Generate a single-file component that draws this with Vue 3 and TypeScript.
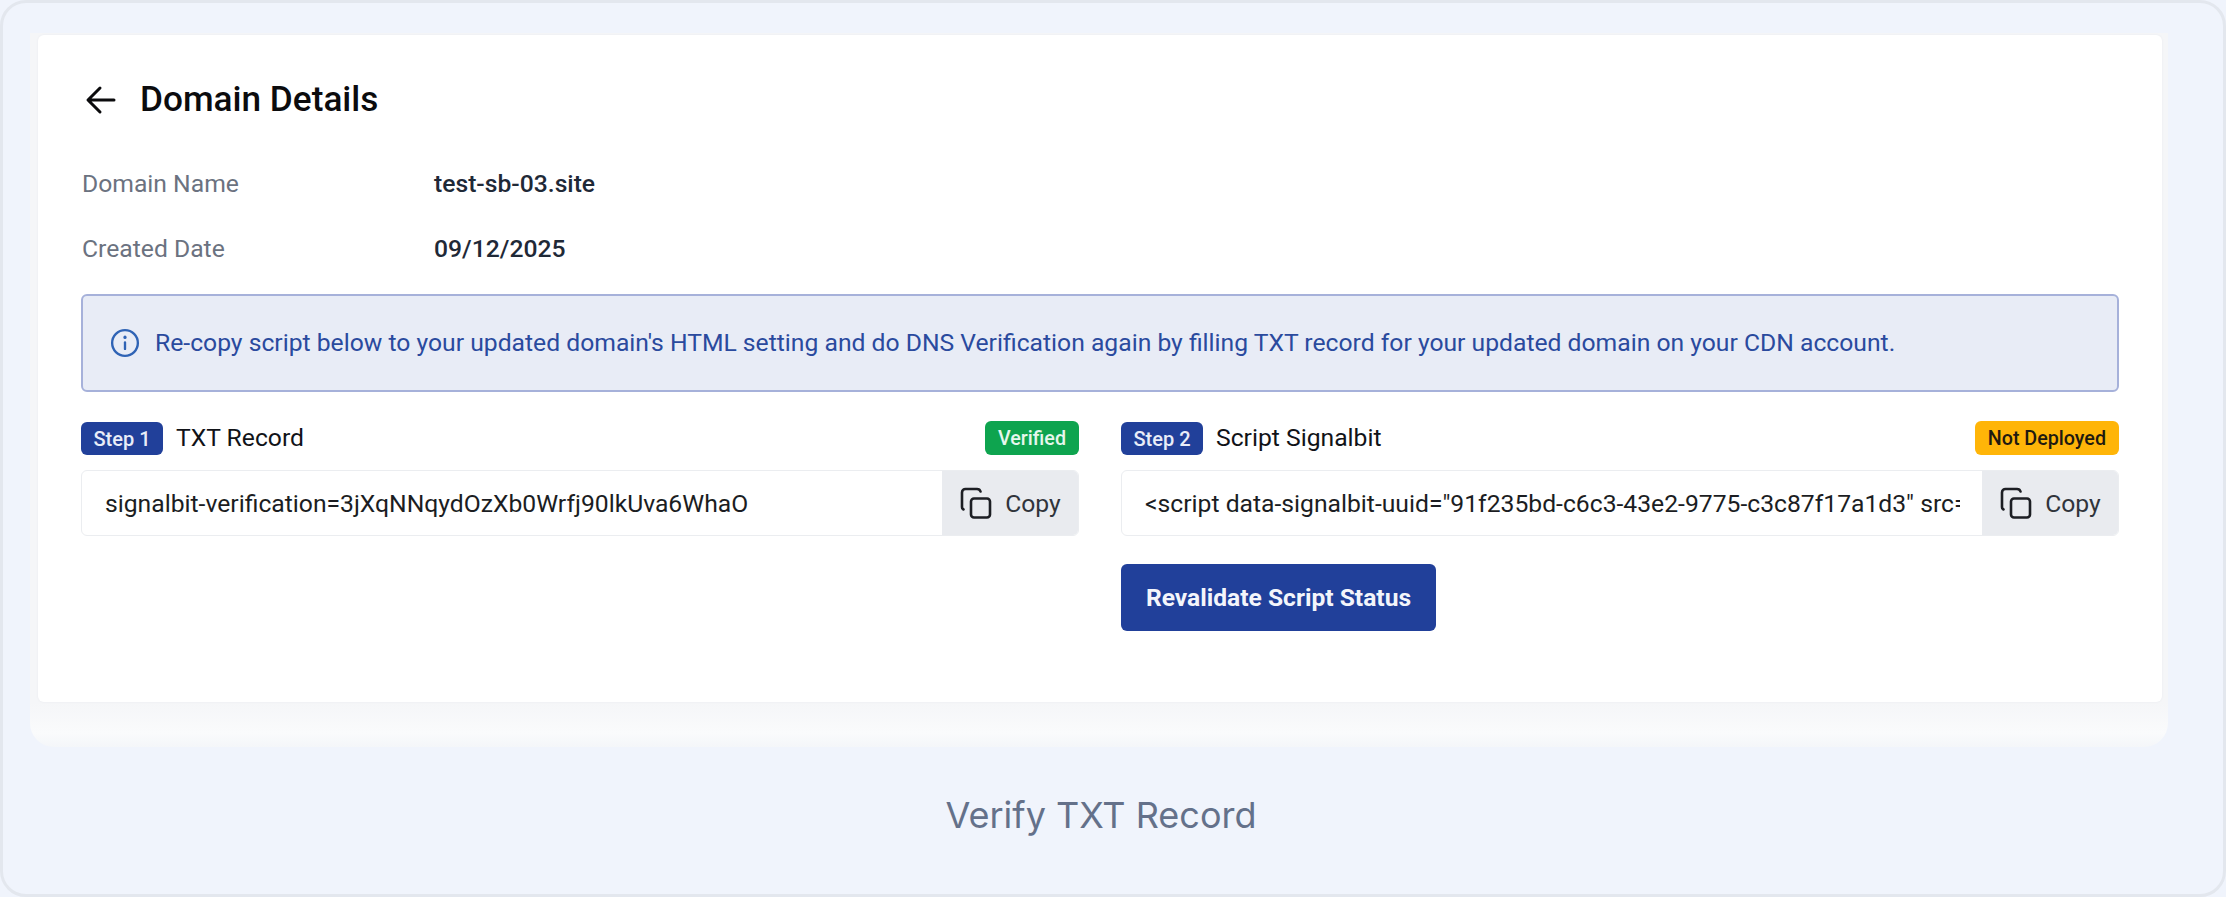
<script setup lang="ts">
interface Field { label: string; value: string }
interface Step {
  step: string
  title: string
  status: string
  statusClass: string
  code: string
}
const fields: Field[] = [
  { label: 'Domain Name', value: 'test-sb-03.site' },
  { label: 'Created Date', value: '09/12/2025' },
]
const steps: Step[] = [
  {
    step: 'Step 1',
    title: 'TXT Record',
    status: 'Verified',
    statusClass: 'ok',
    code: 'signalbit-verification=3jXqNNqydOzXb0Wrfj90lkUva6WhaO',
  },
  {
    step: 'Step 2',
    title: 'Script Signalbit',
    status: 'Not Deployed',
    statusClass: 'warn',
    code: '<script data-signalbit-uuid="91f235bd-c6c3-43e2-9775-c3c87f17a1d3" src=',
  },
]
</script>

<template>
  <div class="frame">
    <div class="tray">
      <main class="card">
        <header class="head">
          <svg class="back" viewBox="0 0 32 32" fill="none" stroke="#0b0b0d" stroke-width="3" stroke-linecap="round" stroke-linejoin="round">
            <path d="M29 16H3.500M15 4 3 16l12 12" />
          </svg>
          <h1>Domain Details</h1>
        </header>

        <div class="fields">
          <div v-for="f in fields" :key="f.label" class="field">
            <span class="label">{{ f.label }}</span>
            <span class="value">{{ f.value }}</span>
          </div>
        </div>

        <div class="alert">
          <svg class="info" viewBox="0 0 28 28" fill="none" stroke="#2f63b5" stroke-width="2.2" stroke-linecap="round">
            <circle cx="14" cy="14" r="12" />
            <path d="M14 13.500v6" />
            <path d="M14 8.600v.2" stroke-width="3" />
          </svg>
          <span class="alert-text">Re-copy script below to your updated domain's HTML setting and do DNS Verification again by filling TXT record for your updated domain on your CDN account.</span>
        </div>

        <div class="steps">
          <section v-for="s in steps" :key="s.step" class="step">
            <div class="step-head">
              <span class="pill">{{ s.step }}</span>
              <span class="step-title">{{ s.title }}</span>
              <span class="status" :class="s.statusClass">{{ s.status }}</span>
            </div>
            <div class="code-row">
              <div class="code">{{ s.code }}</div>
              <button class="copy" type="button">
                <svg viewBox="0 0 32 32" fill="none" stroke="#1d1f24" stroke-width="2.6" stroke-linecap="round" stroke-linejoin="round">
                  <rect x="11" y="11.500" width="19" height="19" rx="3" />
                  <path d="M3.500 22.500c-1-.5-1.500-1.400-1.500-2.500V5.500A3.500 3.500 0 0 1 5.500 2H17c1.700 0 3 .8 3.500 2.500" />
                </svg>
                <span>Copy</span>
              </button>
            </div>
            <button v-if="s.statusClass === 'warn'" class="revalidate" type="button">Revalidate Script Status</button>
          </section>
        </div>
      </main>
    </div>
    <p class="caption">Verify TXT Record</p>
  </div>
</template>

<style>
html, body { margin: 0; background: #f0f4fc; }
</style>

<style scoped>
.frame {
  box-sizing: border-box;
  width: 2226px;
  height: 897px;
  border: 3px solid #e3e7ee;
  border-radius: 26px;
  background: #f0f4fc;
  display: flex;
  flex-direction: column;
  align-items: flex-start;
  padding: 30px 55px 0 27px;
  font-family: Roboto, "Liberation Sans", sans-serif;
  overflow: hidden;
}
.tray {
  box-sizing: border-box;
  width: 2138px;
  height: 714px;
  padding: 2px 6px 0 8px;
  border-radius: 0 0 24px 24px;
  background: linear-gradient(#f5f6f8 670px, #fafbfc 700px, #f4f6f9 714px);
}
.card {
  box-sizing: border-box;
  height: 667px;
  background: #fff;
  border-radius: 6px;
  padding: 0 43px;
  box-shadow: 0 0 3px rgba(30, 40, 70, 0.05);
}
.head {
  display: flex;
  align-items: center;
  height: 128px;
  gap: 23px;
}
.back { width: 32px; height: 32px; margin: 2px 0 0 4px; }
h1 {
  margin: 0;
  font-size: 35.2px;
  font-weight: 500;
  color: #0b0b0d;
}
.fields { display: flex; flex-direction: column; gap: 25px; }
.field { display: flex; align-items: center; height: 40px; font-size: 24.7px; }
.label { width: 353px; color: #6b7280; padding-left: 1px; box-sizing: border-box; }
.value { color: #1f2937; font-weight: 500; }
.alert {
  box-sizing: border-box;
  height: 98px;
  margin-top: 26px;
  padding: 0 27px;
  display: flex;
  align-items: center;
  gap: 15px;
  font-size: 24.7px;
  color: #2a4a9e;
  background: #e8ecf6;
  border: 2px solid #a6b1da;
  border-radius: 6px;
}
.alert-text { padding-bottom: 2px; }
.info { width: 30px; height: 30px; flex: none; }
.steps {
  display: grid;
  grid-template-columns: 998px 998px;
  gap: 42px;
  margin-top: 29px;
}
.step { display: flex; flex-direction: column; }
.step-head { display: flex; align-items: center; height: 35px; }
.pill {
  box-sizing: border-box;
  width: 82px;
  height: 33px;
  display: flex;
  align-items: center;
  justify-content: center;
  border-radius: 6px;
  background: #21409a;
  color: #e9edf8;
  font-size: 20px;
  font-weight: 500;
}
.step-title { margin-left: 13px; font-size: 24.7px; color: #111318; position: relative; top: -1px; }
.status {
  box-sizing: border-box;
  margin-left: auto;
  height: 34px;
  padding: 1px 13px 0;
  display: flex;
  align-items: center;
  border-radius: 6px;
  font-size: 19.7px;
  font-weight: 500;
  position: relative;
  top: -1px;
}
.status.ok { background: #0ea44f; color: #e6f7ed; }
.status.warn { background: #ffb508; color: #1f1a10; }
.code-row {
  display: flex;
  height: 66px;
  margin-top: 14px;
  border: 1px solid #ebedf0;
  border-radius: 6px;
  box-sizing: border-box;
  overflow: hidden;
}
.code {
  flex: 1;
  min-width: 0;
  margin: 0 22px 0 23px;
  align-self: center;
  white-space: nowrap;
  overflow: hidden;
  font-size: 24.7px;
  color: #1b1d22;
}
.copy {
  flex: none;
  width: 136px;
  border: 0;
  background: #e9ebef;
  display: flex;
  align-items: center;
  justify-content: center;
  gap: 13px;
  padding: 0 0 0 1px;
  font-family: inherit;
  font-size: 24.7px;
  color: #30343b;
}
.copy svg { width: 32px; height: 32px; }
.revalidate {
  align-self: flex-start;
  width: 315px;
  height: 67px;
  margin-top: 28px;
  border: 0;
  border-radius: 6px;
  background: #21409a;
  color: #f3f5fb;
  font-family: inherit;
  font-size: 24.6px;
  font-weight: 700;
  padding: 0;
}
.caption {
  align-self: stretch;
  margin: 46px -4px 0 0;
  text-align: center;
  font-family: Inter, sans-serif;
  font-size: 36px;
  line-height: 44px;
  color: #64718a;
}
</style>
